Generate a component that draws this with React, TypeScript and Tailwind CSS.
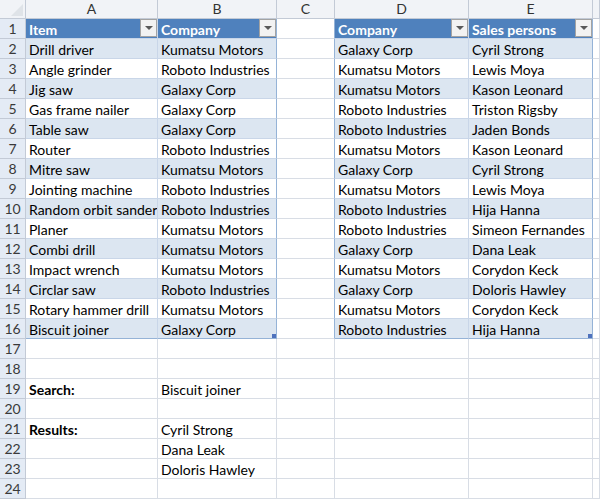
import React from "react";

const COLS = ["A", "B", "C", "D", "E", ""];
const WIDTHS = "26px 132px 119px 58px 134px 124px 1fr";

const items: [string, string][] = [
  ["Drill driver", "Kumatsu Motors"],
  ["Angle grinder", "Roboto Industries"],
  ["Jig saw", "Galaxy Corp"],
  ["Gas frame nailer", "Galaxy Corp"],
  ["Table saw", "Galaxy Corp"],
  ["Router", "Roboto Industries"],
  ["Mitre saw", "Kumatsu Motors"],
  ["Jointing machine", "Roboto Industries"],
  ["Random orbit sander", "Roboto Industries"],
  ["Planer", "Kumatsu Motors"],
  ["Combi drill", "Kumatsu Motors"],
  ["Impact wrench", "Kumatsu Motors"],
  ["Circlar saw", "Roboto Industries"],
  ["Rotary hammer drill", "Kumatsu Motors"],
  ["Biscuit joiner", "Galaxy Corp"],
];

const sales: [string, string][] = [
  ["Galaxy Corp", "Cyril Strong"],
  ["Kumatsu Motors", "Lewis Moya"],
  ["Kumatsu Motors", "Kason Leonard"],
  ["Roboto Industries", "Triston Rigsby"],
  ["Roboto Industries", "Jaden Bonds"],
  ["Kumatsu Motors", "Kason Leonard"],
  ["Galaxy Corp", "Cyril Strong"],
  ["Kumatsu Motors", "Lewis Moya"],
  ["Roboto Industries", "Hija Hanna"],
  ["Roboto Industries", "Simeon Fernandes"],
  ["Galaxy Corp", "Dana Leak"],
  ["Kumatsu Motors", "Corydon Keck"],
  ["Galaxy Corp", "Doloris Hawley"],
  ["Kumatsu Motors", "Corydon Keck"],
  ["Roboto Industries", "Hija Hanna"],
];

const extra: Record<number, [string, string, boolean]> = {
  19: ["Search:", "Biscuit joiner", true],
  21: ["Results:", "Cyril Strong", true],
  22: ["", "Dana Leak", false],
  23: ["", "Doloris Hawley", false],
};

function FilterButton() {
  return (
    <span className="absolute right-0 top-0 flex h-[18px] w-[17px] items-center justify-center border border-[#a3a3a3] bg-[#f2f2f2]">
      <span className="h-0 w-0 border-x-[4px] border-t-[4px] border-x-transparent border-t-[#595959]" />
    </span>
  );
}

function Handle() {
  return <span className="absolute bottom-0 right-0 h-[4px] w-[4px] bg-[#4f72bd]" />;
}

function Cell({ text = "", header = false, band = false, bold = false, right = "#d8dde5", bottom = "#d8dde5", filter = false, handle = false }: {
  text?: string; header?: boolean; band?: boolean; bold?: boolean; right?: string; bottom?: string; filter?: boolean; handle?: boolean;
}) {
  const bg = header ? "bg-[#4f81bd] text-white font-bold" : band ? "bg-[#dce6f1]" : "bg-white";
  return (
    <div
      className={`relative overflow-hidden whitespace-nowrap border-b border-r pl-[3px] pt-[1px] leading-[19px] ${bg} ${bold ? "font-bold" : ""}`}
      style={{ borderRightColor: right, borderBottomColor: bottom }}
    >
      {text}
      {filter && <FilterButton />}
      {handle && <Handle />}
    </div>
  );
}

export default function App() {
  const rows = Array.from({ length: 24 }, (_, i) => i + 1);
  const tbl = "#95b3d7";
  const inner = "#c9d6e8";

  return (
    <div
      className="grid h-[500px] w-[600px] overflow-hidden bg-white text-[14px] text-black"
      style={{ gridTemplateColumns: WIDTHS, gridTemplateRows: "19px repeat(24, 20px)", fontFamily: "Lato, 'Liberation Sans', sans-serif" }}
    >
      {/* corner + column headers */}
      <div className="relative border-b border-r border-[#c3cad6] bg-[#f1f3f7]">
        <span className="absolute bottom-[2px] right-[2px] h-0 w-0 border-b-[12px] border-l-[12px] border-b-[#dfe3e8] border-l-transparent" />
      </div>
      {COLS.map((c, i) => (
        <div key={i} className="border-b border-r border-[#c3cad6] bg-[#f1f3f7] text-center leading-[18px] text-[#333]">
          {c}
        </div>
      ))}

      {rows.map((r) => {
        const inT = r <= 16;
        const last = r === 16;
        const band = inT && r > 1 && r % 2 === 0;
        const head = r === 1;
        const a = head ? ["Item", "Company"] : inT ? items[r - 2] : extra[r] ? [extra[r][0], extra[r][1]] : ["", ""];
        const d = head ? ["Company", "Sales persons"] : inT ? sales[r - 2] : ["", ""];
        const bottomT = last ? tbl : inT ? inner : undefined;
        return (
          <React.Fragment key={r}>
            <div className="border-b border-r border-[#c3cad6] bg-[#e4ebf5] pt-[1px] text-center leading-[18px] text-[#3a3a3a]">{r}</div>
            <Cell text={a[0]} header={head} band={band} bold={!!extra[r]?.[2]} right={inT ? inner : undefined} bottom={bottomT} filter={head} />
            <Cell text={a[1]} header={head} band={band} right={inT ? tbl : undefined} bottom={bottomT} filter={head} handle={last} />
            <Cell right={inT ? tbl : undefined} />
            <Cell text={d[0]} header={head} band={band} right={inT ? inner : undefined} bottom={bottomT} filter={head} />
            <Cell text={d[1]} header={head} band={band} right={inT ? tbl : undefined} bottom={bottomT} filter={head} handle={last} />
            <Cell />
          </React.Fragment>
        );
      })}
    </div>
  );
}
